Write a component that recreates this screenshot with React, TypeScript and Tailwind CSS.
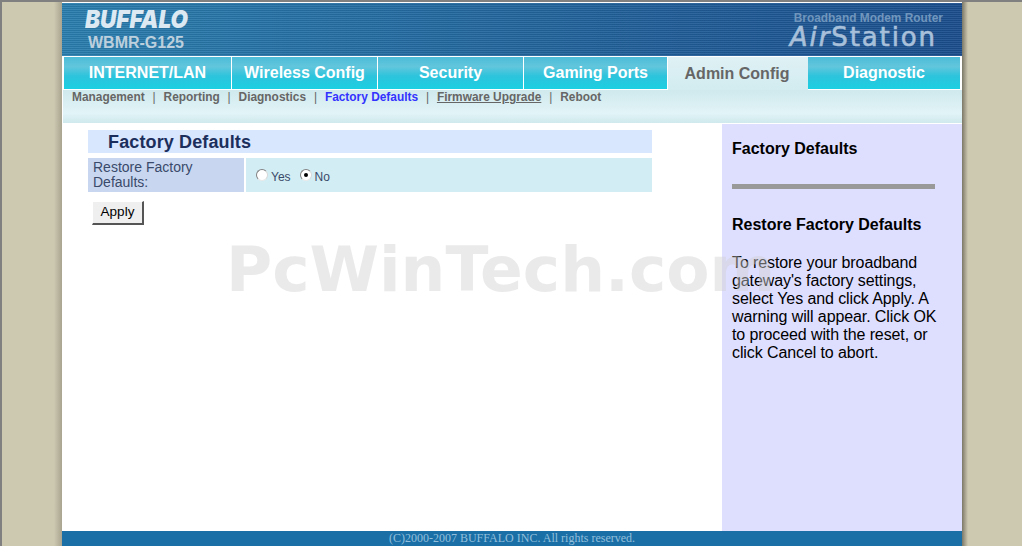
const tabs = [
  { label: 'INTERNET/LAN', width: 'w-[167px]' },
  { label: 'Wireless Config', width: 'w-[145px]' },
  { label: 'Security', width: 'w-[145px]' },
  { label: 'Gaming Ports', width: 'w-[143px]' },
  { label: 'Admin Config', width: 'w-[140px]', active: true },
  { label: 'Diagnostic', width: 'w-[152px]' },
];

const subLinks = [
  { label: 'Management' },
  { label: 'Reporting' },
  { label: 'Diagnostics' },
  { label: 'Factory Defaults', current: true },
  { label: 'Firmware Upgrade', underline: true },
  { label: 'Reboot' },
];

function Radio({ checked }: { checked?: boolean }) {
  return (
    <span className="relative w-[12px] h-[12px] rounded-full bg-white border border-[#808080] border-r-[#d8d8d8] border-b-[#e8e8e8] flex items-center justify-center">
      {checked && <span className="w-[4px] h-[4px] rounded-full bg-black" />}
    </span>
  );
}

export default function App() {
  return (
    <div className="relative w-[1022px] h-[546px] overflow-hidden flex bg-[#cdc8b0] font-['Liberation_Sans',Arial,sans-serif] border-t-2 border-l-2 border-[#808080]">
      {/* Left gutter */}
      <div className="w-[60px] shrink-0 bg-[linear-gradient(90deg,#cdc8b0_0,#cdc8b0_52px,#a8a48f_60px)]" />

      {/* Page */}
      <div className="w-[900px] shrink-0 flex flex-col bg-white pt-px">
        {/* Header */}
        <div className="h-[53px] shrink-0 flex justify-between bg-[repeating-linear-gradient(180deg,rgba(255,255,255,0.07)_0,rgba(255,255,255,0.07)_1px,rgba(0,0,0,0.07)_1px,rgba(0,0,0,0.07)_2px),linear-gradient(90deg,#2a7eae,#1b4e8d)]">
          <div className="pl-[23px] pt-[4px]">
            <div className="h-[24px] text-[25px] leading-[24px] font-black italic text-[#dce9f3] font-['Inter','Liberation_Sans',sans-serif] scale-x-[0.9] origin-left">BUFFALO</div>
            <div className="mt-[3px] pl-[3px] text-[16px] leading-[18px] font-bold text-[#bccfdd]">WBMR-G125</div>
          </div>
          <div className="pr-[19px] pt-[8px] flex flex-col items-end">
            <div className="text-[11.9px] leading-[14px] font-bold text-[#7096bd]">Broadband Modem Router</div>
            <div className="mr-[6px] mt-[1px] text-[26px] leading-[22px] tracking-[1.9px] text-[#a8c0da] font-['DejaVu_Sans',sans-serif] [-webkit-text-stroke:0.6px_#a8c0da]"><span className="italic">Air</span>Station</div>
          </div>
        </div>

        {/* Main tabs */}
        <div className="h-[33px] mt-px shrink-0 flex pl-[2px] bg-white">
          {tabs.map((tab) => (
            <div
              key={tab.label}
              className={
                tab.active
                  ? `${tab.width} h-[33px] pr-[2px] flex items-center justify-center text-[16px] font-bold text-[#666666] bg-[linear-gradient(180deg,#dff1f5,#d2ecf0)]`
                  : `${tab.width} h-[32px] mr-px flex items-center justify-center text-[16px] font-bold text-white bg-[linear-gradient(180deg,#4cbcd8_0,#62c6dc_30%,#2cc4dc_60%,#1ccfe2_100%)]`
              }
            >
              {tab.label}
            </div>
          ))}
        </div>

        {/* Sub navigation */}
        <div className="h-[33px] shrink-0 ml-[1px] flex items-start pl-[9px] bg-[linear-gradient(180deg,#cfe9ec_0,#e2f4f8_70%,#cfe9ec_100%)] text-[11.9px] leading-[14px] font-bold">
          {subLinks.map((link, i) => (
            <div key={link.label} className="flex">
              {i > 0 && <span className="mx-[7.9px] font-normal text-[#666666]">|</span>}
              <span className={link.current ? 'text-[#3333ff]' : link.underline ? 'text-[#666666] underline' : 'text-[#666666]'}>{link.label}</span>
            </div>
          ))}
        </div>

        {/* Body */}
        <div className="flex-1 min-h-0 flex mt-px">
          <div className="w-[660px] shrink-0 pl-[26px] pt-[6px]">
            <div className="w-[564px] h-[23px] bg-[#d8e6fe] pl-[20px] text-[18px] leading-[24px] tracking-[0.13px] font-bold text-[#1c2f5c]">Factory Defaults</div>
            <div className="w-[564px] h-[34px] mt-[5px] flex">
              <div className="w-[156px] bg-[#c8d6f0] pl-[5px] pt-[2px] text-[14px] leading-[15px] text-[#3a4a6a]">Restore Factory Defaults:</div>
              <div className="ml-[2px] flex-1 bg-[#d2edf3] flex items-center pl-[10px] text-[12px] text-[#3a4a6a]">
                <Radio />
                <span className="ml-[3px] mt-[3px]">Yes</span>
                <span className="w-[9px]" />
                <Radio checked />
                <span className="ml-[3px] mt-[3px]">No</span>
              </div>
            </div>
            <button className="ml-[4px] mt-[9px] w-[52px] h-[24px] bg-[#efefef] text-[13.5px] text-black border border-[#ffffff] border-r-2 border-b-2 border-r-[#555555] border-b-[#555555]">Apply</button>
          </div>

          <div className="w-[240px] shrink-0 bg-[#dedeff] pl-[10px] pr-[22px] pt-[16px] text-black">
            <div className="text-[16px] leading-[18px] font-bold">Factory Defaults</div>
            <div className="mt-[26px] h-[5px] w-[203px] bg-[#999999]" />
            <div className="mt-[27px] text-[16px] leading-[18px] font-bold">Restore Factory Defaults</div>
            <p className="mt-[20px] text-[16px] leading-[18px] tracking-[-0.1px]">To restore your broadband gateway's factory settings, select Yes and click Apply. A warning will appear. Click OK to proceed with the reset, or click Cancel to abort.</p>
          </div>
        </div>

        {/* Footer */}
        <div className="h-[15px] shrink-0 bg-[#1a6fa6] text-center text-[12px] leading-[15px] text-[#93bfdc] font-['Liberation_Serif','Times_New_Roman',serif]">(C)2000-2007 BUFFALO INC. All rights reserved.</div>
      </div>

      {/* Right gutter */}
      <div className="flex-1 bg-[linear-gradient(90deg,#7c7868_0,#cdc8b0_6px)]" />

      {/* Watermark */}
      <div className="absolute left-[224px] top-[232px] text-[63px] leading-[72px] font-bold font-['DejaVu_Sans',sans-serif] text-[#d0d0d0]/45 whitespace-nowrap pointer-events-none">PcWinTech.com</div>
    </div>
  );
}
